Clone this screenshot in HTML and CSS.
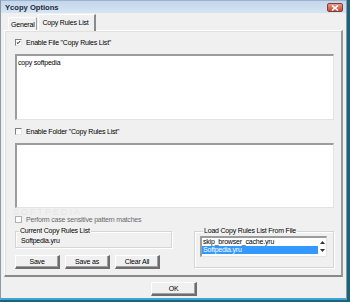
FILE: index.html
```html
<!DOCTYPE html>
<html lang="en">
<head>
    <meta charset="UTF-8">
    <title>Ycopy Options</title>
    <link rel="stylesheet" href="styles.css">
</head>
<body>
    <div class="window">
        <div class="titlebar">
            <span class="title">Ycopy Options</span>
            <span class="close">
                <svg width="8" height="6" viewBox="0 0 8 6"><path d="M1 0.5 L7 5.5 M7 0.5 L1 5.5" stroke="#fff" stroke-width="1.6"/></svg>
            </span>
        </div>
        <div class="tabs">
            <div class="tab">General</div>
            <div class="tab active">Copy Rules List</div>
        </div>
        <div class="panel">
            <div class="check">
                <span class="box">
                    <svg width="7" height="7" viewBox="0 0 7 7"><path d="M1.2 3.4 L2.8 5 L5.8 1.5" fill="none" stroke="#000" stroke-width="1.3"/></svg>
                </span>
                Enable File "Copy Rules List"
            </div>
            <div class="edit edit-file">copy softpedia</div>
            <div class="check">
                <span class="box"></span>
                Enable Folder "Copy Rules List"
            </div>
            <div class="edit edit-folder"></div>
            <div class="check disabled">
                <span class="box"></span>
                Perform case sensitive pattern matches
                <span class="watermark">SOFTPEDIA</span>
            </div>
            <div class="bottom">
                <div class="left-col">
                    <fieldset class="group current">
                        <legend>Current Copy Rules List</legend>
                        <div class="current-name">Softpedia.yru</div>
                    </fieldset>
                    <div class="buttons">
                        <button class="btn">Save</button>
                        <button class="btn">Save as</button>
                        <button class="btn">Clear All</button>
                    </div>
                </div>
                <fieldset class="group load">
                    <legend>Load Copy Rules List From File</legend>
                    <div class="listbox">
                        <div class="items">
                            <div class="item">skip_browser_cache.yru</div>
                            <div class="item selected">Softpedia.yru</div>
                        </div>
                        <div class="scrollbar">
                            <svg width="5" height="3" viewBox="0 0 5 3"><path d="M2.5 0 L5 3 L0 3 Z" fill="#333"/></svg>
                            <svg width="5" height="3" viewBox="0 0 5 3"><path d="M0 0 L5 0 L2.5 3 Z" fill="#333"/></svg>
                        </div>
                    </div>
                </fieldset>
            </div>
        </div>
        <div class="footer">
            <button class="btn ok">OK</button>
        </div>
    </div>
</body>
</html>
```

FILE: styles.css
```css
body {
    margin: 0;
    width: 350px;
    height: 302px;
    background-color: #1d6378;
    font-family: 'Liberation Sans', Arial, sans-serif;
    font-size: 7px;
    color: #000;
    overflow: hidden;
}
.window {
    width: 345px;
    height: 298px;
    background-color: #f0f0f0;
    border-left: 1px solid #8d99a6;
    border-right: 1px solid #8d99a6;
    border-bottom: 2px solid #3ba6d6;
    display: flex;
    flex-direction: column;
}
.titlebar {
    height: 13px;
    display: flex;
    align-items: center;
    justify-content: space-between;
    padding: 0 3px 0 4px;
    background: linear-gradient(#c2d6ec, #d7e4f2);
    border-top: 1px solid #9fb4cc;
    box-sizing: border-box;
}
.title {
    font-size: 7.6px;
    font-weight: bold;
    color: #1e2b3a;
}
.close {
    width: 16px;
    height: 9px;
    margin-top: 1px;
    background: linear-gradient(#e39a8c, #c24b3c);
    border: 1px solid #8c3a30;
    border-radius: 2px;
    box-sizing: border-box;
    display: flex;
    align-items: center;
    justify-content: center;
}
.tabs {
    display: flex;
    align-items: flex-end;
    height: 17px;
    padding-left: 7px;
}
.tab {
    height: 13px;
    padding: 0 1px 0 2px;
    line-height: 13px;
    white-space: nowrap;
    letter-spacing: -0.2px;
    border-top: 1px solid #fff;
    border-left: 1px solid #fff;
    border-right: 1px solid #a0a0a0;
    box-sizing: border-box;
}
.tab.active {
    height: 17px;
    padding: 0 5px 0 4px;
    margin-left: 1px;
    margin-bottom: -1px;
    border-right: 2px solid #8a8a8a;
    background-color: #f0f0f0;
    position: relative;
    line-height: 15px;
}
.panel {
    margin: 0 3px 0 3px;
    height: 247px;
    padding: 0 7px 0 10px;
    border-top: 1px solid #fff;
    border-left: 1px solid #fff;
    border-right: 2px solid #9a9a9a;
    border-bottom: 2px solid #8a8a8a;
    box-sizing: border-box;
    box-shadow: inset 1px 1px 0 #e0e0e0;
}
.check {
    display: flex;
    align-items: center;
    gap: 4px;
    height: 7px;
    margin-top: 8px;
    letter-spacing: -0.2px;
    position: relative;
}
.box {
    width: 7px;
    height: 7px;
    background-color: #fff;
    border-top: 1px solid #808080;
    border-left: 1px solid #808080;
    border-right: 1px solid #e6e6e6;
    border-bottom: 1px solid #e6e6e6;
    box-sizing: border-box;
    display: flex;
    align-items: center;
    justify-content: center;
    overflow: visible;
}
.check.disabled {
    color: #6a6a6a;
}
.check.disabled .box {
    border-color: #b0b0b0;
}
.watermark {
    position: absolute;
    left: -2px;
    top: -9px;
    font-size: 9px;
    letter-spacing: 2px;
    color: rgba(170, 170, 170, 0.18);
}
.edit {
    margin-top: 8px;
    background-color: #fff;
    border-top: 2px solid #9c9c9c;
    border-left: 2px solid #9c9c9c;
    border-right: 1px solid #e3e3e3;
    border-bottom: 1px solid #e3e3e3;
    box-sizing: border-box;
    padding: 3px 1px;
    letter-spacing: -0.2px;
}
.edit-file {
    height: 66px;
}
.edit-folder {
    height: 65px;
}
.bottom {
    display: flex;
    justify-content: space-between;
    margin-top: 4px;
}
.left-col {
    width: 157px;
}
.group {
    margin: 0;
    padding: 0;
    border: 1px solid #d5d5d5;
    box-shadow: 1px 1px 0 #fff, inset 1px 1px 0 #fff;
    letter-spacing: -0.2px;
}
.group legend {
    padding: 0 1px;
    margin-left: 3px;
    line-height: 8px;
}
.current {
    height: 21px;
    box-sizing: border-box;
}
.current-name {
    padding: 2px 0 0 5px;
}
.buttons {
    display: flex;
    gap: 5px;
    margin-top: 7px;
}
.btn {
    width: 45px;
    height: 14px;
    padding: 0;
    font-family: inherit;
    font-size: 7px;
    letter-spacing: -0.2px;
    color: #000;
    background-color: #f0f0f0;
    border-top: 1px solid #fff;
    border-left: 1px solid #fff;
    border-right: 2px solid #6d6d6d;
    border-bottom: 2px solid #6d6d6d;
    box-shadow: inset -1px -1px 0 #a0a0a0;
}
.load {
    width: 140px;
    height: 41px;
    box-sizing: border-box;
    padding: 1px 6px 0 5px;
}
.listbox {
    display: flex;
    height: 21px;
    background-color: #fff;
    border-top: 2px solid #9c9c9c;
    border-left: 2px solid #9c9c9c;
    border-right: 1px solid #e3e3e3;
    border-bottom: 1px solid #e3e3e3;
    box-sizing: border-box;
}
.items {
    flex: 1;
}
.item {
    height: 8px;
    line-height: 8px;
    padding-left: 1px;
}
.item.selected {
    background-color: #3399ff;
    color: #fff;
}
.scrollbar {
    width: 8px;
    display: flex;
    flex-direction: column;
    align-items: center;
    justify-content: space-between;
    padding: 3px 0 4px;
    box-sizing: border-box;
}
.footer {
    display: flex;
    justify-content: center;
    padding-top: 5px;
    padding-left: 1px;
}
.ok {
    width: 46px;
}
```
